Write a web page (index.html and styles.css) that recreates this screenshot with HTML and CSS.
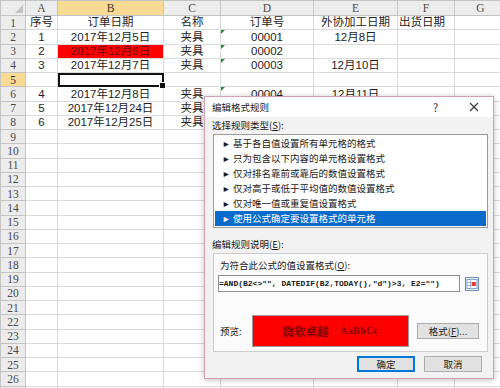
FILE: index.html
```html
<!DOCTYPE html>
<html lang="zh-CN">
<head>
    <meta charset="UTF-8">
    <title>编辑格式规则</title>
    <link rel="stylesheet" href="styles.css">
</head>
<body>
    <table class="grid">
        <colgroup>
            <col class="c-hd"><col class="c-a"><col class="c-b"><col class="c-c"><col class="c-d"><col class="c-e"><col class="c-f"><col class="c-g">
        </colgroup>
        <thead>
            <tr class="colhead">
                <th class="corner"></th><th>A</th><th class="sel">B</th><th>C</th><th>D</th><th>E</th><th>F</th><th>G</th>
            </tr>
        </thead>
        <tbody>
            <tr><th>1</th><td>序号</td><td>订单日期</td><td>名称</td><td>订单号</td><td>外协加工日期</td><td class="left">出货日期</td><td></td></tr>
            <tr><th>2</th><td>1</td><td>2017年12月5日</td><td>夹具</td><td class="txt">00001</td><td>12月8日</td><td></td><td></td></tr>
            <tr><th>3</th><td>2</td><td class="hit">2017年12月6日</td><td>夹具</td><td class="txt">00002</td><td></td><td></td><td></td></tr>
            <tr><th>4</th><td>3</td><td>2017年12月7日</td><td>夹具</td><td class="txt">00003</td><td>12月10日</td><td></td><td></td></tr>
            <tr><th class="sel">5</th><td></td><td class="active"></td><td></td><td></td><td></td><td></td><td></td></tr>
            <tr><th>6</th><td>4</td><td>2017年12月8日</td><td>夹具</td><td class="txt">00004</td><td>12月11日</td><td></td><td></td></tr>
            <tr><th>7</th><td>5</td><td>2017年12月24日</td><td>夹具</td><td></td><td></td><td></td><td></td></tr>
            <tr><th>8</th><td>6</td><td>2017年12月25日</td><td>夹具</td><td></td><td></td><td></td><td></td></tr>
            <tr><th>9</th><td></td><td></td><td></td><td></td><td></td><td></td><td></td></tr>
            <tr><th>10</th><td></td><td></td><td></td><td></td><td></td><td></td><td></td></tr>
            <tr><th>11</th><td></td><td></td><td></td><td></td><td></td><td></td><td></td></tr>
            <tr><th>12</th><td></td><td></td><td></td><td></td><td></td><td></td><td></td></tr>
            <tr><th>13</th><td></td><td></td><td></td><td></td><td></td><td></td><td></td></tr>
            <tr><th>14</th><td></td><td></td><td></td><td></td><td></td><td></td><td></td></tr>
            <tr><th>15</th><td></td><td></td><td></td><td></td><td></td><td></td><td></td></tr>
            <tr><th>16</th><td></td><td></td><td></td><td></td><td></td><td></td><td></td></tr>
            <tr><th>17</th><td></td><td></td><td></td><td></td><td></td><td></td><td></td></tr>
            <tr><th>18</th><td></td><td></td><td></td><td></td><td></td><td></td><td></td></tr>
            <tr><th>19</th><td></td><td></td><td></td><td></td><td></td><td></td><td></td></tr>
            <tr><th>20</th><td></td><td></td><td></td><td></td><td></td><td></td><td></td></tr>
            <tr><th>21</th><td></td><td></td><td></td><td></td><td></td><td></td><td></td></tr>
            <tr><th>22</th><td></td><td></td><td></td><td></td><td></td><td></td><td></td></tr>
            <tr><th>23</th><td></td><td></td><td></td><td></td><td></td><td></td><td></td></tr>
            <tr><th>24</th><td></td><td></td><td></td><td></td><td></td><td></td><td></td></tr>
            <tr><th>25</th><td></td><td></td><td></td><td></td><td></td><td></td><td></td></tr>
            <tr><th>26</th><td></td><td></td><td></td><td></td><td></td><td></td><td></td></tr>
            <tr><th></th><td></td><td></td><td></td><td></td><td></td><td></td><td></td></tr>
        </tbody>
    </table>

    <!-- 对话框：编辑格式规则 -->
    <div class="dialog">
        <div class="titlebar">
            <span class="title">编辑格式规则</span>
            <span class="help">?</span>
            <span class="close">
                <svg width="10" height="10" viewBox="0 0 10 10"><path d="M1 1L9 9M9 1L1 9" stroke="#333" stroke-width="1.1" fill="none"/></svg>
            </span>
        </div>
        <div class="body">
            <p class="label first">选择规则类型(<u>S</u>):</p>
            <ul class="rules">
                <li><span class="arrow">►</span>基于各自值设置所有单元格的格式</li>
                <li><span class="arrow">►</span>只为包含以下内容的单元格设置格式</li>
                <li><span class="arrow">►</span>仅对排名靠前或靠后的数值设置格式</li>
                <li><span class="arrow">►</span>仅对高于或低于平均值的数值设置格式</li>
                <li><span class="arrow">►</span>仅对唯一值或重复值设置格式</li>
                <li class="current"><span class="arrow">►</span>使用公式确定要设置格式的单元格</li>
            </ul>
            <p class="label second">编辑规则说明(<u>E</u>):</p>
            <div class="panel">
                <p class="label inner">为符合此公式的值设置格式(<u>O</u>):</p>
                <div class="formula-row">
                    <div class="formula">=AND(B2&lt;&gt;"",&nbsp;DATEDIF(B2,TODAY(),"d")&gt;3,&nbsp;E2="")</div>
                    <span class="refbtn">
                        <svg width="14" height="14" viewBox="0 0 14 14">
                            <rect x="0.5" y="0.5" width="13" height="13" fill="#e6eef8" stroke="#6f8fb8"/>
                            <rect x="2" y="2.5" width="10" height="9" fill="#fff" stroke="#8aa4c8"/>
                            <path d="M2 5.5H12M2 8.5H12M5.5 2.5V11.5" stroke="#8aa4c8" stroke-width="0.8"/>
                            <circle cx="8.8" cy="7" r="2.3" fill="#e23a2a"/>
                        </svg>
                    </span>
                </div>
                <div class="preview-row">
                    <span class="preview-label">预览:</span>
                    <div class="preview"><b>微软卓越</b><span class="latin">AaBbCc</span></div>
                    <button class="btn format">格式(<u>F</u>)...</button>
                </div>
            </div>
            <div class="actions">
                <button class="btn ok">确定</button>
                <button class="btn">取消</button>
            </div>
        </div>
    </div>
</body>
</html>
```

FILE: styles.css
```css
* {
    box-sizing: border-box;
}
body {
    margin: 0;
    width: 500px;
    height: 388px;
    overflow: hidden;
    position: relative;
    background: #fff;
}

/* === таблица === */
.grid {
    border-collapse: collapse;
    table-layout: fixed;
    width: 506px;
    font-family: "Liberation Sans", "Noto Sans CJK SC", sans-serif;
    font-size: 11.5px;
    color: #1e1e1e;
}
.c-hd { width: 25px; }
.c-a { width: 32px; }
.c-b { width: 106px; }
.c-c { width: 57px; }
.c-d { width: 93px; }
.c-e { width: 84px; }
.c-f { width: 57px; }
.c-g { width: 52px; }

.grid th {
    background: #ececec;
    border: 1px solid #c4c4c4;
    color: #4a4a4a;
    font-family: "Liberation Serif", serif;
    font-weight: normal;
    font-size: 11.5px;
    line-height: 12px;
    padding: 0;
}
.colhead {
    height: 15px;
}
.grid tbody tr {
    height: 14.25px;
}
.grid td {
    border: 1px solid #dadada;
    padding: 0 1px;
    text-align: center;
    vertical-align: bottom;
    line-height: 13px;
    white-space: nowrap;
    overflow: visible;
    position: relative;
}
.grid td.left {
    text-align: left;
}
.grid th.sel {
    background: #f8da94;
    color: #333;
}
.corner {
    position: relative;
}
.corner::after {
    content: "";
    position: absolute;
    right: 2px;
    bottom: 2px;
    border-left: 8px solid transparent;
    border-bottom: 8px solid #c2c2c2;
}
.grid td.hit {
    background: #ff0000;
    color: #6a0000;
}
.grid td.txt::before {
    content: "";
    position: absolute;
    left: 0;
    top: 0;
    border-top: 4px solid #1e8a3a;
    border-right: 4px solid transparent;
}
.grid td.active {
    outline: 2px solid #111;
    outline-offset: -2px;
}
.grid td.active::after {
    content: "";
    position: absolute;
    right: -3px;
    bottom: -3px;
    width: 5px;
    height: 5px;
    background: #111;
    border: 1px solid #fff;
}

/* === диалог === */
.dialog {
    position: absolute;
    left: 204px;
    top: 96px;
    width: 290px;
    height: 283px;
    border: 1px solid #d6a0b2;
    background: #f2f2f2;
    box-shadow: 0 1px 6px rgba(0, 0, 0, 0.25);
    font-family: "Noto Sans CJK SC", sans-serif;
    font-size: 9.5px;
    color: #1a1a1a;
}
.titlebar {
    height: 20px;
    background: #fff;
    display: flex;
    align-items: center;
    padding-left: 7px;
}
.title {
    flex: 1;
}
.help {
    width: 36px;
    font-size: 11px;
    color: #333;
}
.close {
    width: 24px;
    display: flex;
    align-items: center;
}
.body {
    padding: 0 5px 0 8px;
}
.label {
    margin: 0;
    line-height: 13px;
}
.label.first {
    margin-top: 2px;
    margin-left: -1px;
}
.label.second {
    margin-top: 10px;
    margin-left: -1px;
}
.rules {
    list-style: none;
    margin: 2px 0 0;
    padding: 1px;
    height: 94px;
    background: #fff;
    border: 1px solid #9c9c9c;
}
.rules li {
    height: 15px;
    line-height: 15px;
    padding-left: 7px;
    white-space: nowrap;
}
.arrow {
    font-size: 8.5px;
    display: inline-block;
    width: 11px;
}
.rules li.current {
    background: #0a6bcb;
    color: #fff;
}
.panel {
    margin-top: 2px;
    height: 99px;
    background: #fbfbfb;
    border: 1px solid #cdcdcd;
    padding: 5px 0 0 4px;
}
.label.inner {
    margin-left: 2px;
}
.formula-row {
    display: flex;
    align-items: center;
    margin-top: 3px;
    gap: 4px;
}
.formula {
    width: 242px;
    height: 17px;
    background: #fff;
    border: 1px solid #8f8f8f;
    font-family: "Liberation Mono", monospace;
    font-size: 8px;
    font-weight: bold;
    line-height: 15px;
    padding-left: 0;
    white-space: nowrap;
    overflow: hidden;
}
.refbtn {
    display: flex;
    width: 16px;
    height: 16px;
    align-items: center;
    justify-content: center;
}
.preview-row {
    display: flex;
    align-items: center;
    margin-top: 23px;
    padding-left: 2px;
}
.preview-label {
    width: 32px;
}
.preview {
    width: 157px;
    height: 32px;
    background: #ff0000;
    border: 1px solid #9a9a9a;
    display: flex;
    align-items: center;
    justify-content: center;
    gap: 12px;
    color: #7e0000;
}
.preview b {
    font-size: 11.5px;
}
.latin {
    font-family: "Liberation Serif", serif;
    font-size: 9.5px;
    font-weight: bold;
    letter-spacing: 0.6px;
}
.btn {
    font-family: "Noto Sans CJK SC", sans-serif;
    font-size: 9.5px;
    color: #1a1a1a;
    background: #e1e1e1;
    border: 1px solid #adadad;
    padding: 0;
    height: 16px;
    line-height: 13px;
}
.btn.format {
    width: 62px;
    margin-left: 8px;
}
.actions {
    display: flex;
    justify-content: flex-end;
    gap: 9px;
    margin-top: 4px;
    padding-right: 6px;
}
.actions .btn {
    width: 58px;
}
.btn.ok {
    border: 1px solid #0078d7;
    box-shadow: inset 0 0 0 1px #0078d7;
}
```
